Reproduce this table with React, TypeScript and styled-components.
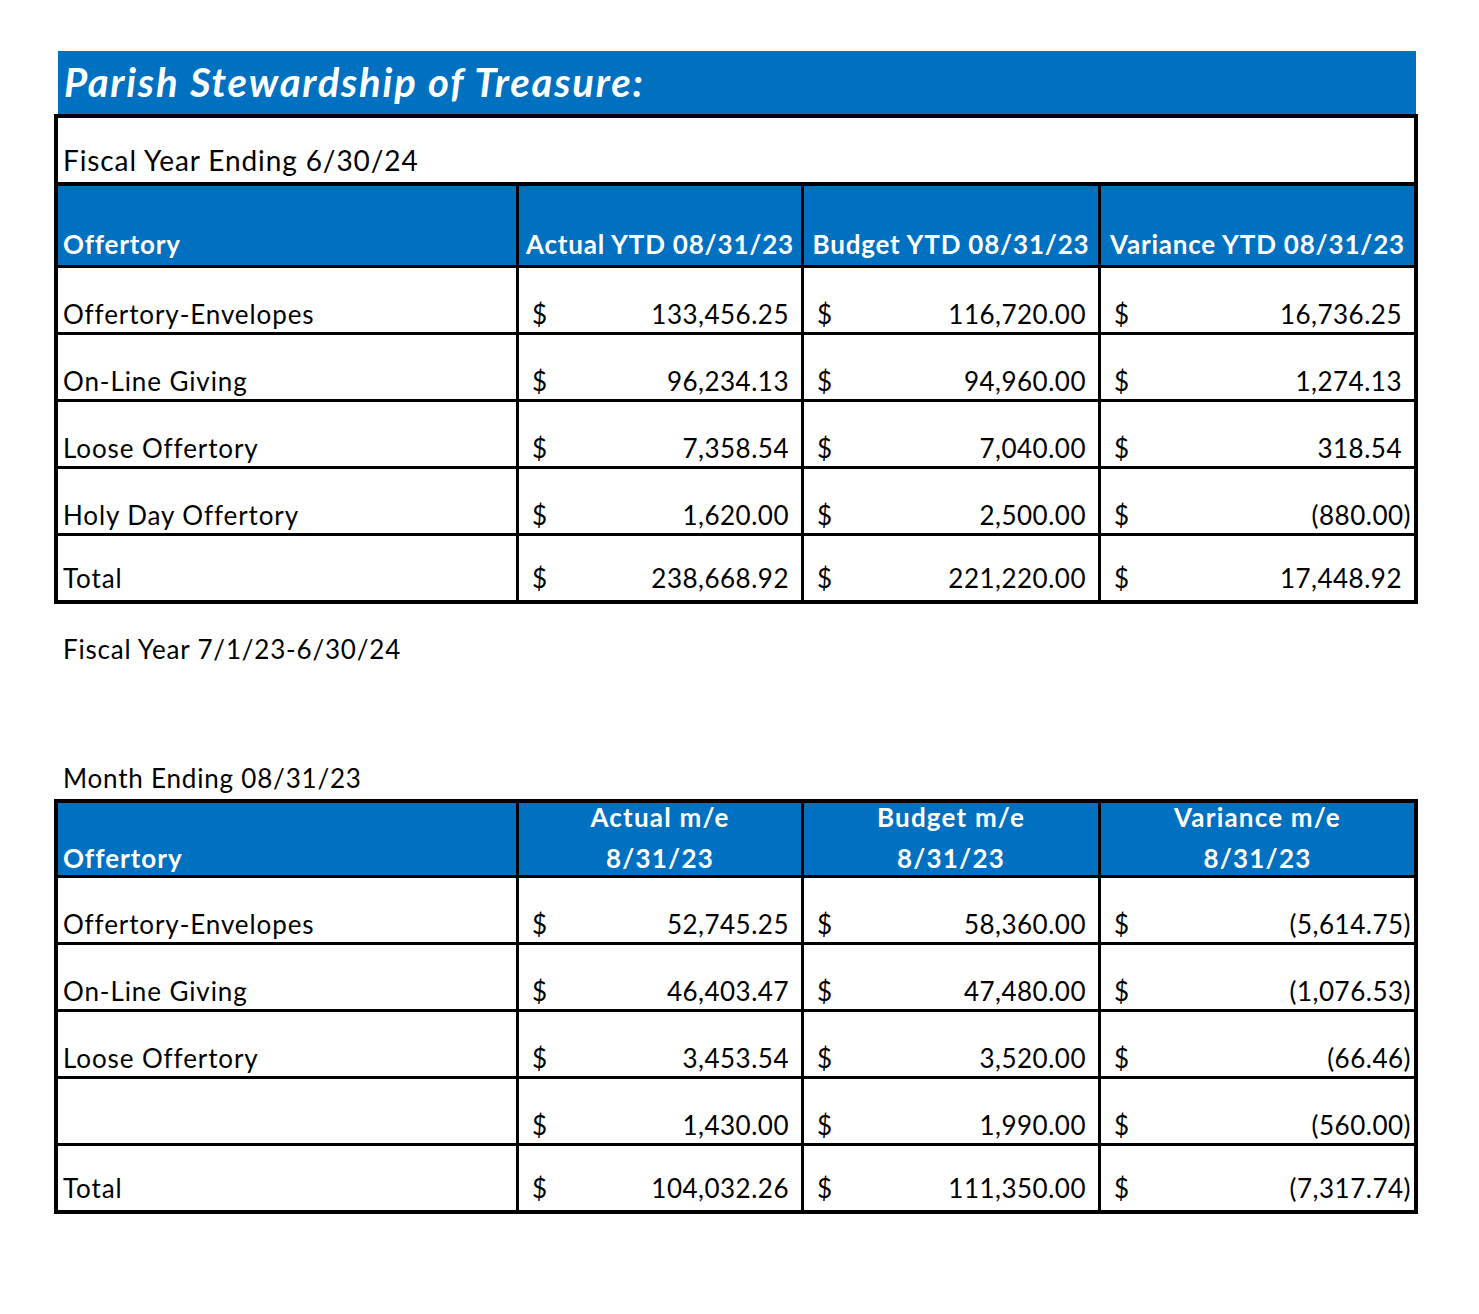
import React from "react";
import styled, { createGlobalStyle } from "styled-components";

const GlobalStyle = createGlobalStyle`
    body {
        margin: 0;
        background: #fff;
        font-family: "Lato", "Liberation Sans", sans-serif;
        color: #000;
    }
`;

type Row = [string, string, string, string];

const ytdRows: Row[] = [
    ["Offertory-Envelopes", "133,456.25", "116,720.00", "16,736.25"],
    ["On-Line Giving", "96,234.13", "94,960.00", "1,274.13"],
    ["Loose Offertory", "7,358.54", "7,040.00", "318.54"],
    ["Holy Day Offertory", "1,620.00", "2,500.00", "(880.00)"],
    ["Total", "238,668.92", "221,220.00", "17,448.92"],
];

const monthRows: Row[] = [
    ["Offertory-Envelopes", "52,745.25", "58,360.00", "(5,614.75)"],
    ["On-Line Giving", "46,403.47", "47,480.00", "(1,076.53)"],
    ["Loose Offertory", "3,453.54", "3,520.00", "(66.46)"],
    ["", "1,430.00", "1,990.00", "(560.00)"],
    ["Total", "104,032.26", "111,350.00", "(7,317.74)"],
];

// accounting format: "$" on the left, room kept for the closing paren
const Money: React.FC<{ value: string; total?: boolean }> = ({ value, total }) => (
    <MoneyCell $pb={total ? 9 : 5}>
        <span>$</span>
        <span>
            {value}
            {!value.startsWith("(") && <ParenSpace />}
        </span>
    </MoneyCell>
);

const BodyRows: React.FC<{ rows: Row[] }> = ({ rows }) => (
    <>
        {rows.map(([label, actual, budget, variance], i) => {
            const total = i === rows.length - 1;
            return (
                <React.Fragment key={i}>
                    <LabelCell $pb={total ? 9 : 5}>{label}</LabelCell>
                    <Money value={actual} total={total} />
                    <Money value={budget} total={total} />
                    <Money value={variance} total={total} />
                </React.Fragment>
            );
        })}
    </>
);

const App: React.FC = () => (
    <Page>
        <GlobalStyle />
        <TitleBar>Parish Stewardship of Treasure:</TitleBar>

        <Table $rows="65px 79px repeat(5, 64px)">
            <CaptionCell>Fiscal Year Ending 6/30/24</CaptionCell>
            <HeadCell $align="left">Offertory</HeadCell>
            <HeadCell>Actual YTD 08/31/23</HeadCell>
            <HeadCell>Budget YTD 08/31/23</HeadCell>
            <HeadCell>Variance YTD 08/31/23</HeadCell>
            <BodyRows rows={ytdRows} />
        </Table>

        <Note $h={64} $pb={6}>Fiscal Year 7/1/23-6/30/24</Note>
        <Note $h={67} $pb={0} />
        <Note $h={64} $pb={8}>Month Ending 08/31/23</Note>

        <Table $rows="72px repeat(5, 64px)">
            <HeadCell $align="left" $pb={4} $ls={1}>Offertory</HeadCell>
            <StackHead>
                <span>Actual m/e</span>
                <span>8/31/23</span>
            </StackHead>
            <StackHead>
                <span>Budget m/e</span>
                <span>8/31/23</span>
            </StackHead>
            <StackHead>
                <span>Variance m/e</span>
                <span>8/31/23</span>
            </StackHead>
            <BodyRows rows={monthRows} />
        </Table>
    </Page>
);

export default App;

const Page = styled.div`
    padding: 51px 0 80px 54px;
    width: 1364px;
`;

const TitleBar = styled.div`
    margin: 0 2px 0 4px;
    height: 63px;
    box-sizing: border-box;
    background: #0070c0;
    color: #fff;
    font-size: 40px;
    font-weight: 700;
    font-style: italic;
    letter-spacing: 1.8px;
    line-height: 40px;
    display: flex;
    align-items: flex-end;
    padding: 0 0 12px 6px;
    white-space: nowrap;
`;

const Table = styled.div<{ $rows: string }>`
    display: grid;
    grid-template-columns: 458px 282px 294px 313px;
    grid-template-rows: ${p => p.$rows};
    gap: 3px;
    padding: 4px;
    background: #000;
    font-size: 26px;
    line-height: 26px;
    letter-spacing: 0.9px;
`;

const Cell = styled.div<{ $pb?: number }>`
    background: #fff;
    display: flex;
    align-items: flex-end;
    box-sizing: border-box;
    white-space: nowrap;
    padding-bottom: ${p => p.$pb ?? 5}px;
`;

const CaptionCell = styled(Cell)`
    grid-column: 1 / -1;
    border-bottom: 1px solid #000;
    padding-left: 5px;
    padding-bottom: 8px;
    font-size: 28px;
    line-height: 28px;
`;

const HeadCell = styled(Cell)<{ $align?: "left" | "center"; $ls?: number }>`
    background: #0070c0;
    color: #fff;
    font-weight: 700;
    letter-spacing: ${p => p.$ls ?? 0.8}px;
    justify-content: ${p => (p.$align === "left" ? "flex-start" : "center")};
    padding-left: ${p => (p.$align === "left" ? 5 : 0)}px;
    padding-bottom: ${p => p.$pb ?? 8}px;
`;

const StackHead = styled.div`
    background: #0070c0;
    color: #fff;
    font-weight: 700;
    letter-spacing: 1.2px;
    display: flex;
    flex-direction: column;
    align-items: center;
    justify-content: flex-end;
    gap: 15px;
    padding-bottom: 4px;
    box-sizing: border-box;
`;

const LabelCell = styled(Cell)`
    padding-left: 5px;
`;

const MoneyCell = styled(Cell)`
    justify-content: space-between;
    padding-left: 13px;
    padding-right: 3px;
    letter-spacing: 0.5px;
`;

const ParenSpace = styled.span`
    display: inline-block;
    width: 9px;
`;

const Note = styled.div<{ $h: number; $pb: number }>`
    height: ${p => p.$h}px;
    box-sizing: border-box;
    display: flex;
    align-items: flex-end;
    padding: 0 0 ${p => p.$pb}px 9px;
    font-size: 26px;
    line-height: 26px;
    letter-spacing: 0.8px;
`;
